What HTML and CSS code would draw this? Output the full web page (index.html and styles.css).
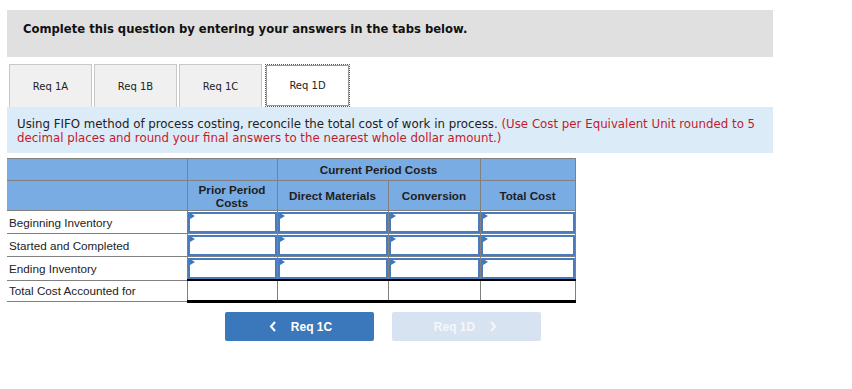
FILE: index.html
```html
<!DOCTYPE html>
<html lang="en">
  <head>
    <meta charset="UTF-8" />
    <title>Req 1D</title>
    <link rel="stylesheet" href="styles.css">
  </head>
  <body>
    <div class="banner">Complete this question by entering your answers in the tabs below.</div>

    <div class="tabs">
      <button class="tab">Req 1A</button>
      <button class="tab">Req 1B</button>
      <button class="tab">Req 1C</button>
      <button class="tab active">Req 1D</button>
    </div>

    <div class="prompt">
      <span>Using FIFO method of process costing, reconcile the total cost of work in process.</span>
      <span class="hint">(Use Cost per Equivalent Unit rounded to 5 decimal places and round your final answers to the nearest whole dollar amount.)</span>
    </div>

    <table class="costs">
      <colgroup>
        <col class="c-label" />
        <col class="c-prior" />
        <col class="c-dm" />
        <col class="c-conv" />
        <col class="c-total" />
      </colgroup>
      <thead>
        <tr class="head-top">
          <th></th>
          <th></th>
          <th colspan="2">Current Period Costs</th>
          <th></th>
        </tr>
        <tr class="head-sub">
          <th></th>
          <th>Prior Period<br />Costs</th>
          <th>Direct Materials</th>
          <th>Conversion</th>
          <th>Total Cost</th>
        </tr>
      </thead>
      <tbody>
        <tr>
          <td class="row-label">Beginning Inventory</td>
          <td class="entry"><input type="text" /></td>
          <td class="entry"><input type="text" /></td>
          <td class="entry"><input type="text" /></td>
          <td class="entry"><input type="text" /></td>
        </tr>
        <tr>
          <td class="row-label">Started and Completed</td>
          <td class="entry"><input type="text" /></td>
          <td class="entry"><input type="text" /></td>
          <td class="entry"><input type="text" /></td>
          <td class="entry"><input type="text" /></td>
        </tr>
        <tr>
          <td class="row-label">Ending Inventory</td>
          <td class="entry"><input type="text" /></td>
          <td class="entry"><input type="text" /></td>
          <td class="entry"><input type="text" /></td>
          <td class="entry"><input type="text" /></td>
        </tr>
        <tr class="total-row">
          <td class="row-label">Total Cost Accounted for</td>
          <td class="sum"></td>
          <td class="sum"></td>
          <td class="sum"></td>
          <td class="sum"></td>
        </tr>
      </tbody>
    </table>

    <div class="nav">
      <button class="nav-btn prev">
        <svg class="chev" width="8" height="11" viewBox="0 0 8 11"><polyline points="6,1 2,5.5 6,10" /></svg>
        Req 1C
      </button>
      <button class="nav-btn next" disabled>
        Req 1D
        <svg class="chev" width="8" height="11" viewBox="0 0 8 11"><polyline points="2,1 6,5.5 2,10" /></svg>
      </button>
    </div>
  </body>
</html>
```

FILE: styles.css
```css
body {
  margin: 10px 0 0 7px;
  font-family: "DejaVu Sans", Verdana, sans-serif;
  color: #222;
  background: #fff;
}

.banner {
  width: 750px;
  height: 47px;
  padding-left: 16px;
  background: #e0e0e0;
  font-size: 11.6px;
  font-weight: bold;
  line-height: 39px;
  color: #111;
}

.tabs {
  display: flex;
  gap: 2px;
  margin: 7px 0 0 2px;
  height: 43px;
}

.tab {
  width: 83px;
  height: 43px;
  background: #f0f0f0;
  border: 1px solid #c8c8c8;
  border-bottom: none;
  font-family: "DejaVu Sans", Verdana, sans-serif;
  font-size: 10px;
  color: #222;
  padding: 0;
}

.tab.active {
  width: 85px;
  margin-left: 1px;
  background: #fff;
  border: 1px dotted #2a5db0;
  outline: 1px solid #999;
  outline-offset: -2px;
}

.prompt {
  width: 756px;
  padding: 10px 0 8px 10px;
  background: #dcebf8;
  font-size: 11.8px;
  line-height: 14px;
  color: #222;
}

.hint {
  color: #c41a2a;
}

.costs {
  margin-top: 5px;
  border-collapse: collapse;
  table-layout: fixed;
  width: 568px;
  font-family: "Liberation Sans", Arial, sans-serif;
  font-size: 11.7px;
}

.c-label { width: 180px; }
.c-prior { width: 90px; }
.c-dm { width: 111px; }
.c-conv { width: 92px; }
.c-total { width: 95px; }

.costs th {
  background: #7aace4;
  border: 1px solid #808080;
  font-weight: bold;
  color: #1e1e1e;
  line-height: 13px;
  padding: 0;
}

.costs th:first-child,
.costs td:first-child {
  border-left: none;
}

.head-top th {
  height: 21px;
}

.head-sub th {
  height: 29px;
}

.costs td {
  border: 1px solid #808080;
  padding: 0;
  height: 22px;
}

.row-label {
  padding-left: 2px !important;
  color: #222;
}

.entry {
  position: relative;
}

.entry input {
  display: block;
  width: 100%;
  height: 21px;
  box-sizing: border-box;
  border: 2px solid #4a7bbd;
  margin: 0;
  padding: 0;
}

/* small marker in the corner of every answer box */
.entry::before {
  content: "";
  position: absolute;
  left: 2px;
  top: 2px;
  border-left: 5px solid #3b78c4;
  border-top: 3px solid transparent;
  border-bottom: 3px solid transparent;
}

.total-row td {
  height: 19px;
}

.total-row td.sum {
  border-top: 2px solid #000;
  border-bottom: 3px solid #000;
}

.nav {
  display: flex;
  gap: 18px;
  margin: 9px 0 0 218px;
}

.nav-btn {
  display: flex;
  align-items: center;
  justify-content: center;
  gap: 14px;
  width: 149px;
  height: 29px;
  border: none;
  border-radius: 2px;
  font-family: "Liberation Sans", Arial, sans-serif;
  font-size: 12px;
  font-weight: bold;
  color: #fff;
}

.prev {
  background: #3a77bb;
  padding-right: 4px;
}

.next {
  background: #d7e3f1;
  color: #f4f7fb;
  padding-left: 4px;
}

.chev polyline {
  fill: none;
  stroke: currentColor;
  stroke-width: 2;
}
```
